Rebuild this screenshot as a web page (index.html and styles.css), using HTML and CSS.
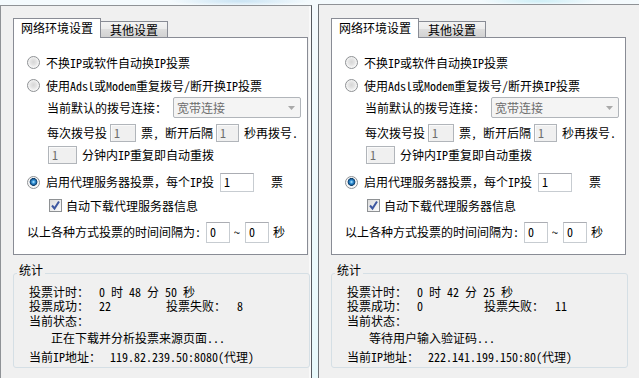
FILE: index.html
```html
<!DOCTYPE html>
<html lang="zh-CN">
<head>
    <meta charset="UTF-8">
    <title>投票设置</title>
    <link rel="stylesheet" href="styles.css">
</head>
<body>
    <div class="win win-left">
        <div class="tabs">
            <div class="tab active">网络环境设置</div>
            <div class="tab">其他设置</div>
        </div>
        <div class="panel">
            <div class="row opt r1"><span class="radio"></span>不换IP或软件自动换IP投票</div>
            <div class="row opt"><span class="radio"></span>使用Adsl或Modem重复拨号/断开换IP投票</div>
            <div class="row sub r3">当前默认的拨号连接：<div class="combo">宽带连接<svg width="7" height="4" viewBox="0 0 7 4"><path d="M0 0h7L3.5 4z" fill="#a9a9a9"/></svg></div></div>
            <div class="row sub r4">每次拨号投<input class="box off w26" value="1" disabled>票, 断开后隔<input class="box off w23" value="1" disabled>秒再拨号.</div>
            <div class="row sub r5"><input class="box off w29" value="1" disabled>分钟内IP重复即自动重拨</div>
            <div class="row opt r6"><span class="radio on"></span>启用代理服务器投票，每个IP投<input class="box w34" value="1">票</div>
            <div class="row chk r7"><span class="check"><svg width="11" height="11" viewBox="0 0 11 11"><path d="M2 5.5l2.5 3L9 1.5" fill="none" stroke="#3d57a0" stroke-width="2"/></svg></span>自动下载代理服务器信息</div>
            <div class="row gap r8">以上各种方式投票的时间间隔为:<input class="box w24" value="0">~<input class="box w24" value="0">秒</div>
        </div>
        <fieldset class="stats">
            <legend>统计</legend>
            <div class="stat s1"><span class="lbl">投票计时：</span>0 时 48 分 50 秒</div>
            <div class="stat"><span class="lbl">投票成功：</span><span class="val">22</span><span class="lbl2">投票失败：</span>8</div>
            <div class="stat s3">当前状态：</div>
            <div class="stat s4 msg">正在下载并分析投票来源页面...</div>
            <div class="stat s5"><span class="lbl ip">当前IP地址：</span>119.82.239.50:8080(代理)</div>
        </fieldset>
    </div>

    <div class="win win-right">
        <div class="tabs">
            <div class="tab active">网络环境设置</div>
            <div class="tab">其他设置</div>
        </div>
        <div class="panel">
            <div class="row opt r1"><span class="radio"></span>不换IP或软件自动换IP投票</div>
            <div class="row opt"><span class="radio"></span>使用Adsl或Modem重复拨号/断开换IP投票</div>
            <div class="row sub r3">当前默认的拨号连接：<div class="combo">宽带连接<svg width="7" height="4" viewBox="0 0 7 4"><path d="M0 0h7L3.5 4z" fill="#a9a9a9"/></svg></div></div>
            <div class="row sub r4">每次拨号投<input class="box off w26" value="1" disabled>票, 断开后隔<input class="box off w23" value="1" disabled>秒再拨号.</div>
            <div class="row sub r5"><input class="box off w29" value="1" disabled>分钟内IP重复即自动重拨</div>
            <div class="row opt r6"><span class="radio on"></span>启用代理服务器投票，每个IP投<input class="box w34" value="1">票</div>
            <div class="row chk r7"><span class="check"><svg width="11" height="11" viewBox="0 0 11 11"><path d="M2 5.5l2.5 3L9 1.5" fill="none" stroke="#3d57a0" stroke-width="2"/></svg></span>自动下载代理服务器信息</div>
            <div class="row gap r8">以上各种方式投票的时间间隔为:<input class="box w24" value="0">~<input class="box w24" value="0">秒</div>
        </div>
        <fieldset class="stats">
            <legend>统计</legend>
            <div class="stat s1"><span class="lbl">投票计时：</span>0 时 42 分 25 秒</div>
            <div class="stat"><span class="lbl">投票成功：</span><span class="val">0</span><span class="lbl2">投票失败：</span>11</div>
            <div class="stat s3">当前状态：</div>
            <div class="stat s4 msg">等待用户输入验证码...</div>
            <div class="stat s5"><span class="lbl ip">当前IP地址：</span>222.141.199.150:80(代理)</div>
        </fieldset>
    </div>
</body>
</html>
```

FILE: styles.css
```css
body {
    margin: 0;
    width: 639px;
    height: 378px;
    overflow: hidden;
    display: flex;
    gap: 6px;
    font-family: "Noto Sans Mono CJK SC", "Noto Sans CJK SC", monospace;
    font-size: 12px;
    line-height: 14px;
    color: #000;
    background:
        radial-gradient(ellipse 70px 5px at 240px 1px, #c9e3f3, transparent),
        radial-gradient(ellipse 60px 4px at 540px 1px, #cdeef6, transparent),
        linear-gradient(#f4fafd, #e8f9fb);
}

.win {
    box-sizing: border-box;
    background: #f0f0f0;
    padding: 12px 0 0 12px;
}

.win-left {
    width: 312px;
    margin-top: 5px;
    border: 1px solid #8f9296;
    border-right-color: #555a60;
    border-bottom: none;
    box-shadow: inset -2px 0 0 #f9f9f9;
}

.win-right {
    flex: 1;
    margin-top: 4px;
    padding-top: 13px;
    border-top: 1px solid #8f9296;
    border-left: 1px solid #6e7378;
}

/* tabs */

.tabs {
    display: flex;
    align-items: flex-end;
    height: 19px;
}

.tab {
    box-sizing: border-box;
    text-align: center;
}

.tab.active {
    position: relative;
    z-index: 1;
    width: 88px;
    height: 20px;
    margin-bottom: -1px;
    padding-top: 2px;
    border: 1px solid #898c95;
    border-bottom: none;
    background: #fff;
}

.tab:not(.active) {
    width: 67px;
    height: 16px;
    padding-top: 1px;
    border-top: 1px solid #898c95;
    border-right: 1px solid #898c95;
    background: linear-gradient(#f3f3f3, #ebebeb 50%, #dddddd 50%, #d2d2d2);
}

.panel {
    box-sizing: border-box;
    width: 295px;
    height: 218px;
    padding-top: 13px;
    border: 1px solid #898c95;
    background: #fff;
}

/* rows */

.row {
    display: flex;
    align-items: center;
    height: 23px;
    white-space: nowrap;
}

.opt { padding-left: 13px; }
.sub { padding-left: 33px; }
.chk { padding-left: 35px; }
.gap { padding-left: 13px; }

.r3 { height: 21px; }
.r4 { height: 22px; margin-top: 4px; }
.r5 { height: 21px; }
.r6 { height: 22px; margin-top: 6px; }
.r7 { height: 21px; margin-top: 2px; }
.r8 { height: 22px; margin-top: 5px; }

.radio {
    box-sizing: border-box;
    width: 13px;
    height: 13px;
    margin-right: 6px;
    border: 1px solid #8e9194;
    border-radius: 50%;
    background: radial-gradient(circle at 50% 45%, #d6d6d6 0, #e4e4e4 3px, #f7f7f7 5.5px);
}

.radio.on {
    background: radial-gradient(circle at 50% 45%, #c9f0ff 0, #3a9be0 1.5px, #17578f 3px, #0d3d69 3.6px, #f3f3f3 4.2px, #fafafa 5.5px);
}

.check {
    box-sizing: border-box;
    display: flex;
    align-items: center;
    justify-content: center;
    width: 13px;
    height: 13px;
    margin-right: 4px;
    border: 1px solid #8e9194;
    background: linear-gradient(135deg, #dcdcdc, #fbfbfb);
}

.box {
    box-sizing: border-box;
    height: 19px;
    margin: 0 5px 0 3px;
    padding: 0 0 1px 3px;
    font: inherit;
    color: #000;
    background: #fff;
    border: 1px solid #c7ccd1;
    border-top-color: #abadb3;
    outline: none;
}

.box.off {
    height: 18px;
    color: #6d6d6d;
    background: #f0f0f0;
    border-color: #b1b5ba;
    box-shadow: inset 1px 1px 0 #fafafa;
}

.w23 { width: 23px; }
.w24 { width: 24px; height: 21px; }
.w26 { width: 26px; }
.w29 { width: 29px; height: 21px; margin-left: 1px; }
.w34 { width: 34px; margin: 0 17px 0 6px; }

.r8 .box { margin: 0 4px 0 5px; }

.combo {
    box-sizing: border-box;
    display: flex;
    align-items: center;
    justify-content: space-between;
    width: 128px;
    height: 21px;
    margin-left: 6px;
    padding: 0 5px 0 3px;
    color: #6d6d6d;
    background: #f4f4f4;
    border: 1px solid #b1b5ba;
    border-radius: 2px;
}

/* stats box */

.stats {
    box-sizing: border-box;
    width: 297px;
    margin: 8px 0 0;
    padding: 2px 0 3px;
    min-inline-size: 0;
    border: 1px solid #d5dfe5;
    border-radius: 3px;
}

.stats legend {
    margin-left: 3px;
    padding: 0 2px 6px;
    line-height: 14px;
}

.stat {
    display: flex;
    height: 14px;
    padding-left: 15px;
    white-space: pre;
}

.s3 { margin-top: 1px; }
.s4 { margin-top: 3px; }
.s5 { margin-top: 5px; }
.msg { padding-left: 37px; }

.lbl { width: 70px; }
.lbl.ip { width: 81px; }
.val { width: 67px; }
.lbl2 { width: 71px; }
```
